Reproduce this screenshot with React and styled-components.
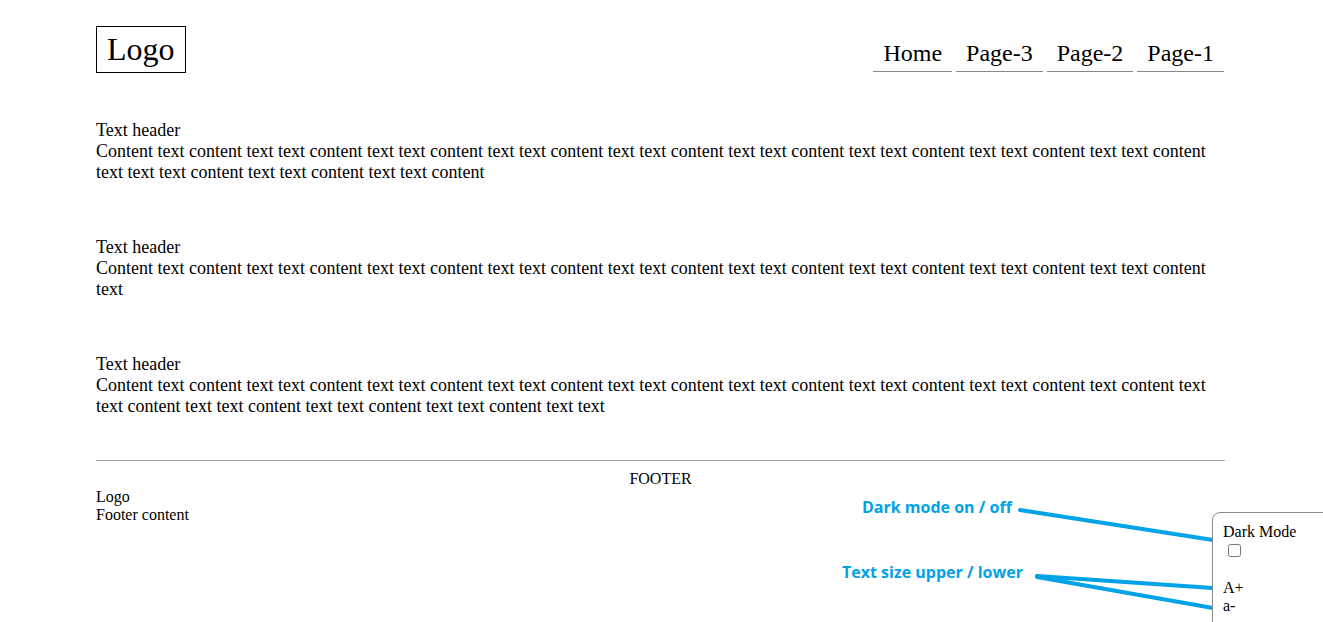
import React, { useState } from 'react';
import styled, { createGlobalStyle } from 'styled-components';

const GlobalStyle = createGlobalStyle`
  body {
    margin: 0;
    font-family: "Liberation Serif", "Times New Roman", serif;
    color: #000;
    background: #fff;
  }
`;

const Page = styled.div`
  padding: 26px 98px 0 96px;
`;

const Header = styled.header`
  display: flex;
  justify-content: space-between;
  align-items: flex-end;
`;

const LogoBox = styled.div`
  border: 1px solid #000;
  padding: 4px 10px;
  font-size: 32px;
`;

const Nav = styled.nav`
  display: flex;
  gap: 4px;
  margin: 0 1px 1px 0;
`;

const NavItem = styled.a`
  font-size: 24px;
  padding: 4px 10px 4px;
  border-bottom: 1px solid #888;
  color: #000;
  text-decoration: none;
`;

const Main = styled.main`
  display: flex;
  flex-direction: column;
  gap: 54px;
  margin-top: 47px;
`;

const Section = styled.section`
  font-size: 18px;
`;

const SectionTitle = styled.div``;

const SectionText = styled.p`
  margin: 0;
`;

const Footer = styled.footer`
  margin-top: 43px;
  border-top: 1px solid #a8a8a8;
  padding-top: 9px;
  font-size: 16px;
`;

const FooterTitle = styled.div`
  text-align: center;
`;

const SettingsPanel = styled.aside`
  position: fixed;
  right: -21px;
  bottom: -10px;
  width: 110px;
  height: 98px;
  padding: 10px;
  border: 1px solid #8a8a8a;
  border-radius: 8px;
  background: #fff;
  font-size: 16px;
`;

const Check = styled.input`
  display: block;
  margin: 3px 3px 22px 5px;
`;

const SizeBtn = styled.div`
  cursor: pointer;
`;

const Note = styled.div`
  position: absolute;
  left: ${(p) => p.$x}px;
  top: ${(p) => p.$y}px;
  font-family: "Open Sans", sans-serif;
  font-weight: 700;
  font-size: 16px;
  color: #00a2e8;
  white-space: nowrap;
`;

const Overlay = styled.svg`
  position: absolute;
  left: 0;
  top: 0;
  pointer-events: none;
`;

const group = (n) => Array(n).fill('text text content').join(' ');
const line1 = 'Content text content ' + group(8);

const sections = [
  line1 + ' text text text content text text content text text content',
  line1 + ' text',
  'Content text content ' + group(7) + ' text content text text content text text content text text content text text content text text',
];

export default function App() {
  const [dark, setDark] = useState(false);
  return (
    <>
      <GlobalStyle />
      <Page>
        <Header>
          <LogoBox>Logo</LogoBox>
          <Nav>
            <NavItem>Home</NavItem>
            <NavItem>Page-3</NavItem>
            <NavItem>Page-2</NavItem>
            <NavItem>Page-1</NavItem>
          </Nav>
        </Header>
        <Main>
          {sections.map((s, i) => (
            <Section key={i}>
              <SectionTitle>Text header</SectionTitle>
              <SectionText>{s}</SectionText>
            </Section>
          ))}
        </Main>
        <Footer>
          <FooterTitle>FOOTER</FooterTitle>
          <div>Logo</div>
          <div>Footer content</div>
        </Footer>
      </Page>

      <Note $x={862} $y={496}>Dark mode on / off</Note>
      <Note $x={842} $y={561}>Text size upper / lower</Note>
      <Overlay width="1323" height="622">
        <g stroke="#00a2e8" strokeWidth="4" strokeLinecap="round">
          <line x1="1020" y1="510" x2="1213" y2="540" />
          <line x1="1037" y1="576" x2="1213" y2="588" />
          <line x1="1037" y1="577" x2="1213" y2="608" />
        </g>
      </Overlay>

      <SettingsPanel>
        <div>Dark Mode</div>
        <Check type="checkbox" checked={dark} onChange={() => setDark(!dark)} />
        <SizeBtn>A+</SizeBtn>
        <SizeBtn>a-</SizeBtn>
      </SettingsPanel>
    </>
  );
}
